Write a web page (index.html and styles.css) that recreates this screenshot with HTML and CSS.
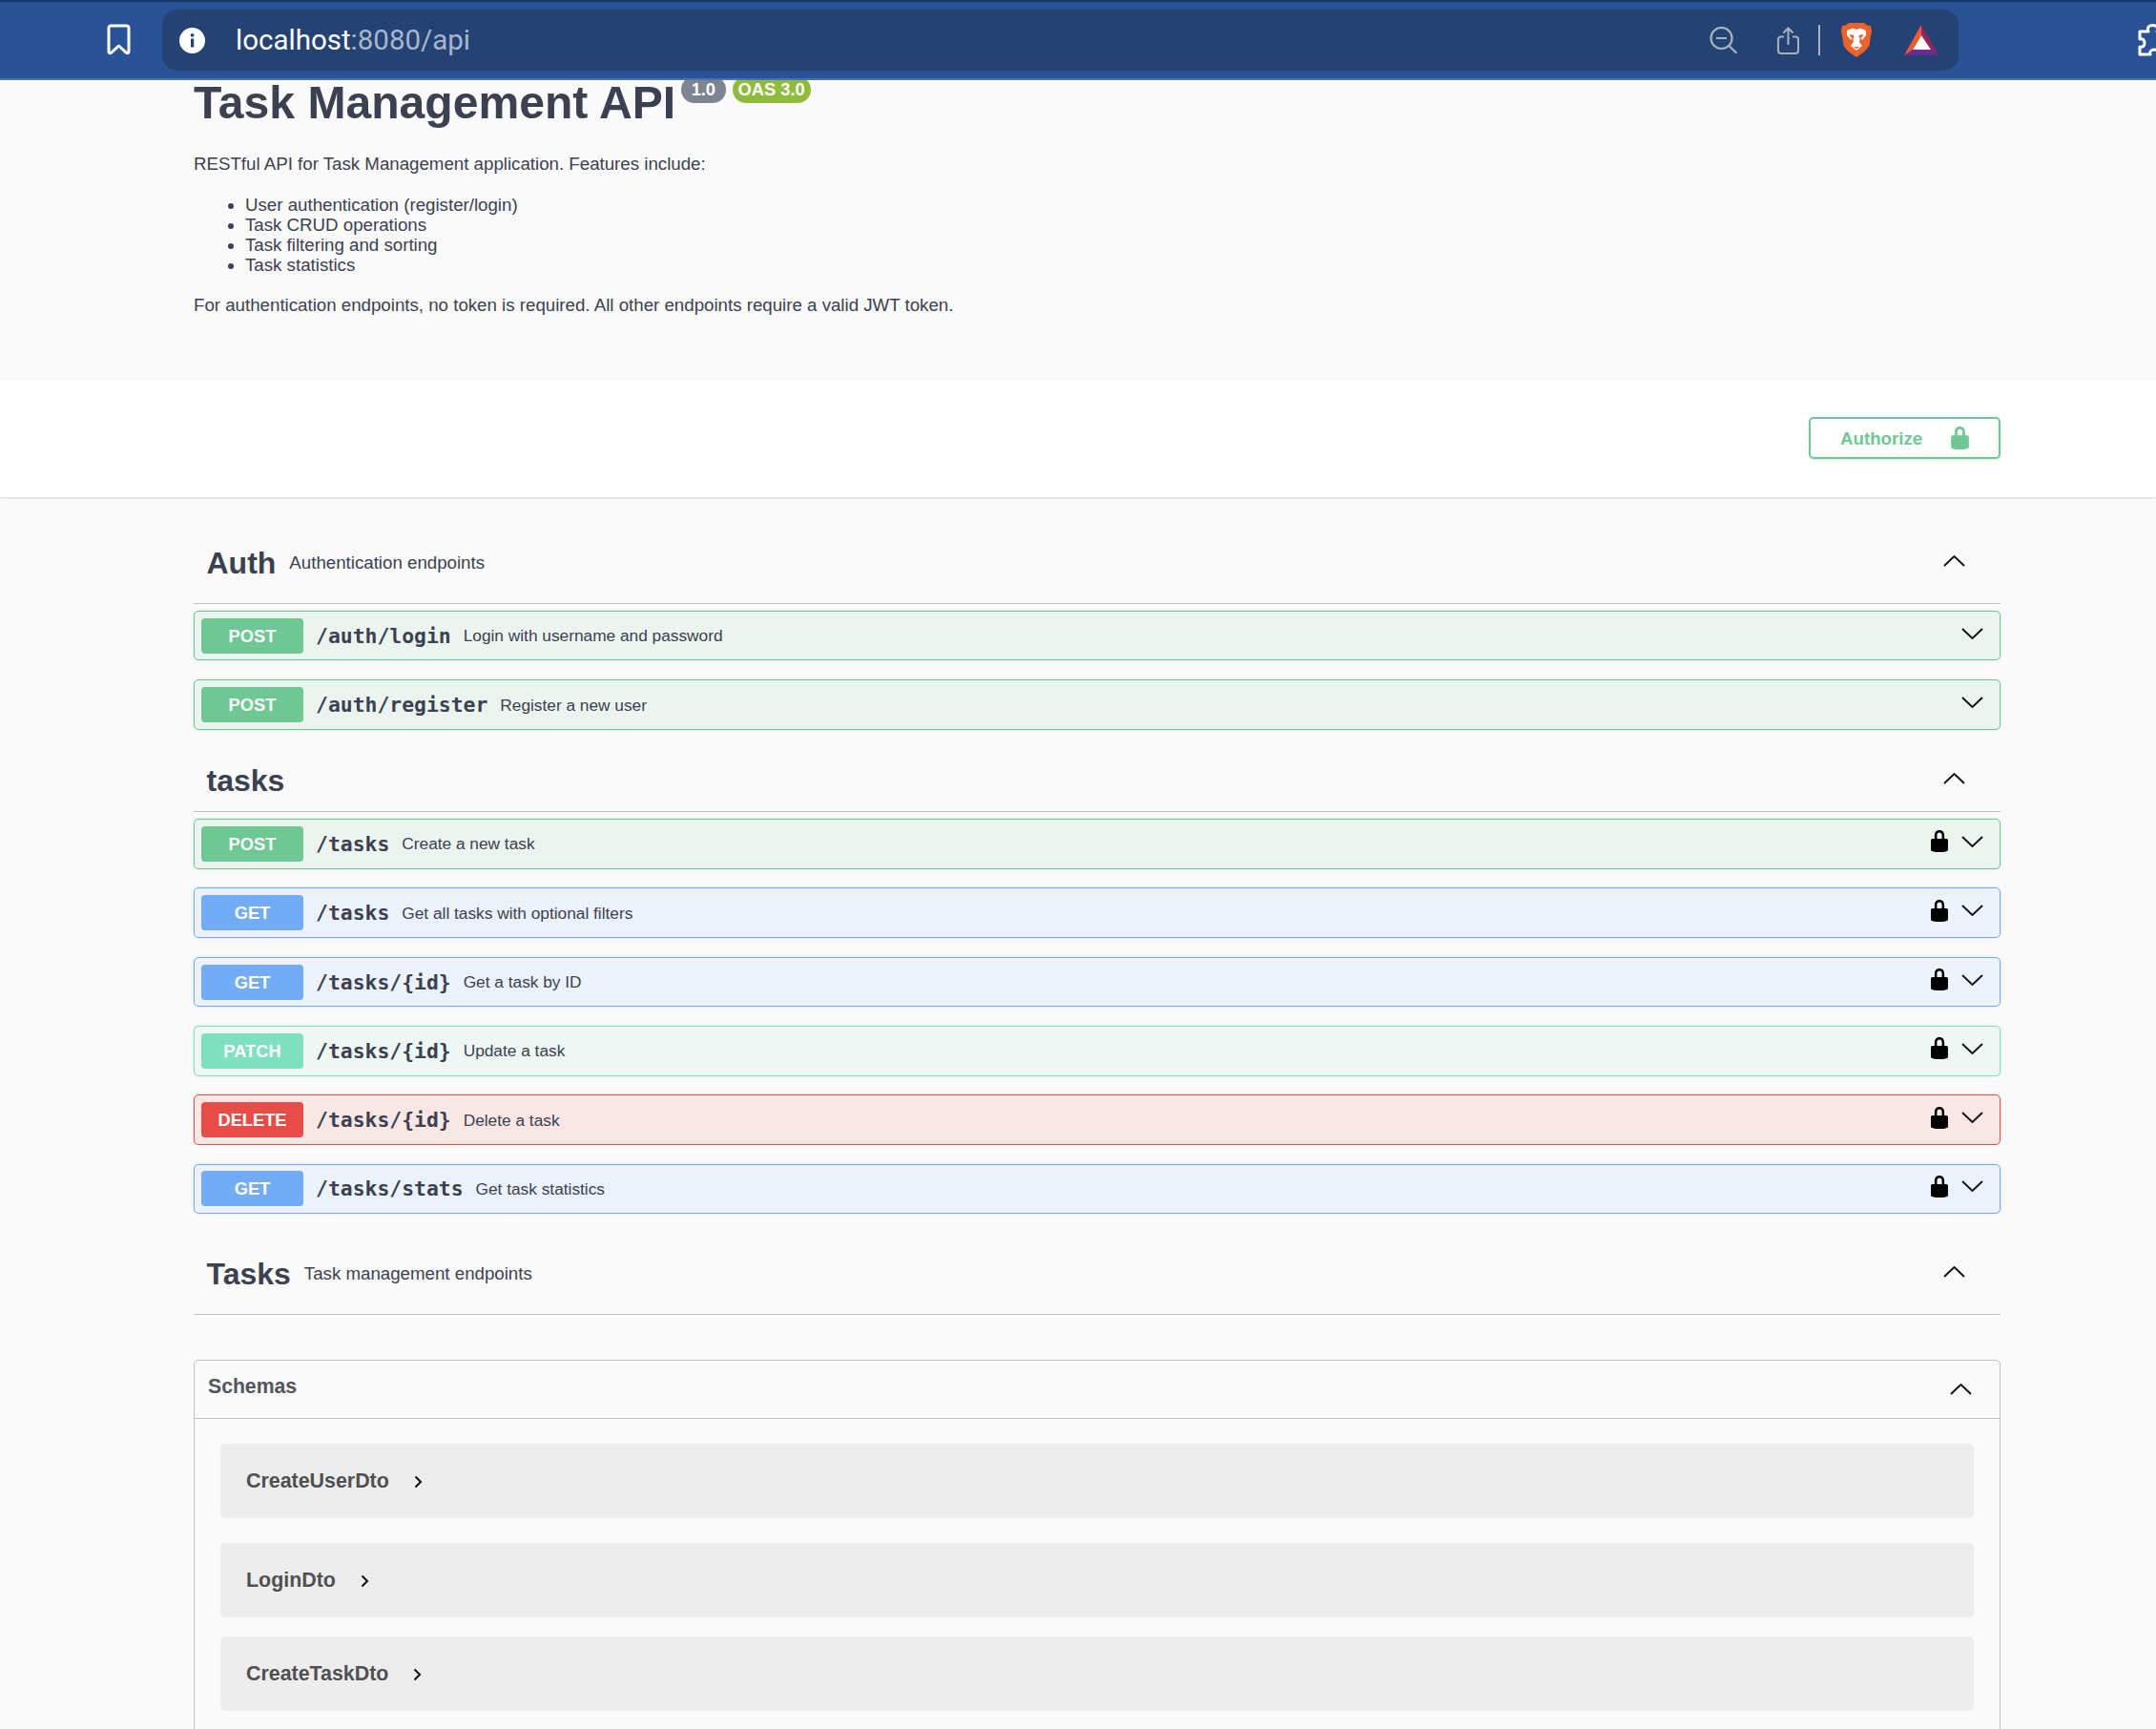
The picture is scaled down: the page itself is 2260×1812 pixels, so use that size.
FILE: index.html
```html
<!DOCTYPE html>
<html lang="en">
<head>
<meta charset="utf-8">
<title>Task Management API</title>
<link rel="stylesheet" href="styles.css">
</head>
<body>
<svg class="defs" aria-hidden="true">
  <symbol id="lock" viewBox="3 1 14 18"><path d="M15.8 8H14V5.6C14 2.703 12.665 1 10 1 7.334 1 6 2.703 6 5.6V8H4c-.553 0-1 .646-1 1.199V17c0 .549.428 1.139.951 1.307l1.197.387C5.672 18.861 6.55 19 7.1 19h5.8c.549 0 1.428-.139 1.951-.307l1.196-.387c.524-.167.953-.757.953-1.306V9.199C17 8.646 16.352 8 15.8 8zM12 8H8V5.199C8 3.754 8.797 3 10 3c1.203 0 2 .754 2 2.199V8z"/></symbol>
  <symbol id="down" viewBox="0 0 23 12"><path d="M1 1l10.500 10L22 1" fill="none" stroke="currentColor" stroke-width="1.900"/></symbol>
  <symbol id="up" viewBox="0 0 23 12"><path d="M1 11L11.500 1 22 11" fill="none" stroke="currentColor" stroke-width="1.900"/></symbol>
  <symbol id="right" viewBox="0 0 9 14"><path d="M1.500 1.500L7 7l-5.500 5.500" fill="none" stroke="currentColor" stroke-width="2"/></symbol>
</svg>

<header class="chrome">
  <svg class="ic-bookmark" viewBox="0 0 25 33"><path d="M4.500 2h16a2.500 2.500 0 0 1 2.500 2.500V29c0 1.800-1.500 2.300-2.700 1.200L12.500 23l-7.800 7.200C3.500 31.300 2 30.800 2 29V4.500A2.500 2.500 0 0 1 4.500 2z" fill="none" stroke="#fff" stroke-width="3" stroke-linejoin="round"/></svg>
  <div class="urlbar">
    <svg class="ic-info" viewBox="0 0 27 27"><circle cx="13.500" cy="13.500" r="13.500" fill="#fff"/><rect x="12" y="11.500" width="3.200" height="9" fill="#244273"/><circle cx="13.600" cy="7.800" r="1.900" fill="#244273"/></svg>
    <div class="url"><span class="url-host">localhost</span><span class="url-rest">:8080/api</span></div>
    <div class="url-tools">
      <svg class="ic-zoom" viewBox="0 0 30 28"><circle cx="12.500" cy="12" r="11" fill="none" stroke="#a9b1bd" stroke-width="2.200"/><path d="M7 12h11M20.500 20l8 8" fill="none" stroke="#a9b1bd" stroke-width="2.200"/></svg>
      <svg class="ic-share" viewBox="0 0 23 29"><path d="M7 10.500H4a3 3 0 0 0-3 3V25a3 3 0 0 0 3 3h15a3 3 0 0 0 3-3V13.500a3 3 0 0 0-3-3h-3M11.500 19V1.500M6.500 6.500l5-5 5 5" fill="none" stroke="#a9b1bd" stroke-width="2"/></svg>
      <span class="tool-sep"></span>
      <svg class="ic-brave" viewBox="0 0 32 36"><path d="M8 0h16l3 2.500 4 .500 1 6-1 4-1.500 11-5 6L16 36l-8.500-6-5-6L1 13 0 9l1-6 4-.500z" fill="#f0622b"/><path d="M6 8l6-2.500 4 1.500 4-1.500 6 2.500v5l-4 5-2-3-1 5 3 4-6 5-6-5 3-4-1-5-2 3-4-5z" fill="#fff"/><path d="M8.500 12l5 1-.500 3-3-1zM23.500 12l-5 1 .500 3 3-1z" fill="#f0622b"/><path d="M12.500 25h7l-3.500 2z" fill="#f0622b"/></svg>
      <svg class="ic-bat" viewBox="0 0 36 32"><path d="M18 0l18 32-8-6-10-15z" fill="#93265f"/><path d="M0 32l9-6h19l8 6z" fill="#662d91"/><path d="M18 11l10 15H9z" fill="#fff"/><path d="M18 0v11L9 26 0 32z" fill="#f15a30"/></svg>
    </div>
  </div>
  <svg class="ic-puzzle" viewBox="0 0 36 34"><path d="M2 8h9c-2-4 1-6.500 4.500-6.500S22 4 20 8h9v8c4-2 6-.5 6 3s-2 6-6 4v9h-8c1-3-1-5-4-5s-5 2-4 5H2v-8c3 1 5-1 5-4s-2-5-5-4z" fill="none" stroke="#fff" stroke-width="3" stroke-linejoin="round"/></svg>
</header>

<section class="info">
  <div class="title-row">
    <h1 class="title">Task Management API</h1>
    <span class="stamp stamp-version">1.0</span>
    <span class="stamp stamp-oas">OAS 3.0</span>
  </div>
  <p class="info-lead">RESTful API for Task Management application. Features include:</p>
  <ul class="info-list">
    <li>User authentication (register/login)</li>
    <li>Task CRUD operations</li>
    <li>Task filtering and sorting</li>
    <li>Task statistics</li>
  </ul>
  <p class="info-note">For authentication endpoints, no token is required. All other endpoints require a valid JWT token.</p>
</section>

<section class="auth-band">
  <button class="authorize"><span>Authorize</span><svg class="authorize-lock"><use href="#lock"/></svg></button>
</section>

<main class="main">
  <section class="tag-section">
    <div class="tag-head">
      <h2 class="tag-name">Auth</h2><span class="tag-desc">Authentication endpoints</span>
      <svg class="tag-chevron"><use href="#up"/></svg>
    </div>
    <div class="op op-post">
      <span class="method">POST</span><span class="path">/auth/login</span><span class="op-desc">Login with username and password</span>
      <svg class="op-chevron"><use href="#down"/></svg>
    </div>
    <div class="op op-post">
      <span class="method">POST</span><span class="path">/auth/register</span><span class="op-desc">Register a new user</span>
      <svg class="op-chevron"><use href="#down"/></svg>
    </div>
  </section>

  <section class="tag-section">
    <div class="tag-head tag-head-short">
      <h2 class="tag-name">tasks</h2>
      <svg class="tag-chevron"><use href="#up"/></svg>
    </div>
    <div class="op op-post">
      <span class="method">POST</span><span class="path">/tasks</span><span class="op-desc">Create a new task</span>
      <svg class="op-lock"><use href="#lock"/></svg><svg class="op-chevron"><use href="#down"/></svg>
    </div>
    <div class="op op-get">
      <span class="method">GET</span><span class="path">/tasks</span><span class="op-desc">Get all tasks with optional filters</span>
      <svg class="op-lock"><use href="#lock"/></svg><svg class="op-chevron"><use href="#down"/></svg>
    </div>
    <div class="op op-get">
      <span class="method">GET</span><span class="path">/tasks/{id}</span><span class="op-desc">Get a task by ID</span>
      <svg class="op-lock"><use href="#lock"/></svg><svg class="op-chevron"><use href="#down"/></svg>
    </div>
    <div class="op op-patch">
      <span class="method">PATCH</span><span class="path">/tasks/{id}</span><span class="op-desc">Update a task</span>
      <svg class="op-lock"><use href="#lock"/></svg><svg class="op-chevron"><use href="#down"/></svg>
    </div>
    <div class="op op-delete">
      <span class="method">DELETE</span><span class="path">/tasks/{id}</span><span class="op-desc">Delete a task</span>
      <svg class="op-lock"><use href="#lock"/></svg><svg class="op-chevron"><use href="#down"/></svg>
    </div>
    <div class="op op-get">
      <span class="method">GET</span><span class="path">/tasks/stats</span><span class="op-desc">Get task statistics</span>
      <svg class="op-lock"><use href="#lock"/></svg><svg class="op-chevron"><use href="#down"/></svg>
    </div>
  </section>

  <section class="tag-section">
    <div class="tag-head">
      <h2 class="tag-name">Tasks</h2><span class="tag-desc">Task management endpoints</span>
      <svg class="tag-chevron"><use href="#up"/></svg>
    </div>
  </section>

  <section class="schemas">
    <div class="schemas-head">
      <h4 class="schemas-title">Schemas</h4>
      <svg class="schemas-chevron"><use href="#up"/></svg>
    </div>
    <div class="model model-first"><span class="model-name">CreateUserDto</span><svg class="model-arrow"><use href="#right"/></svg></div>
    <div class="model model-second"><span class="model-name">LoginDto</span><svg class="model-arrow"><use href="#right"/></svg></div>
    <div class="model"><span class="model-name">CreateTaskDto</span><svg class="model-arrow"><use href="#right"/></svg></div>
  </section>
</main>
</body>
</html>
```

FILE: styles.css
```css
* { box-sizing: border-box; }

html, body {
  margin: 0;
  height: 1812px;
  overflow: hidden;
  background: #fafafa;
  color: #3b4151;
  font-family: "Liberation Sans", Arial, sans-serif;
}

.defs { display: none; }

/* browser toolbar */
.chrome {
  position: relative;
  z-index: 2;
  height: 84px;
  display: flex;
  align-items: flex-start;
  padding-left: 112px;
  background: #2a5296;
  border-top: 2px solid #1b3563;
  border-bottom: 2px solid #4a72ad;
  overflow: hidden;
}

.ic-bookmark { width: 25px; height: 33px; margin-top: 23px; flex: none; }

.urlbar {
  width: 1883px;
  height: 64px;
  margin: 8px 0 0 33px;
  padding: 0 21px 0 18px;
  display: flex;
  align-items: center;
  flex: none;
  background: #244273;
  border-radius: 16px;
}

.ic-info { width: 27px; height: 27px; flex: none; }

.url {
  margin-left: 32px;
  font-family: Roboto, sans-serif;
  font-size: 29.500px;
  font-weight: 400;
  line-height: 36px;
}
.url-host { color: #fff; }
.url-rest { color: #a8b6cc; }

.url-tools { margin-left: auto; display: flex; align-items: center; }
.ic-zoom { width: 30px; height: 28px; }
.ic-share { width: 23px; height: 29px; margin-left: 41px; }
.tool-sep { width: 2px; height: 32px; margin-left: 20.500px; background: #a9b1bd; }
.ic-brave { width: 32px; height: 36px; margin-left: 22px; }
.ic-bat { width: 36px; height: 32px; margin-left: 34px; }

.ic-puzzle { width: 36px; height: 34px; margin: 23px 0 0 188px; flex: none; }

/* info */
.info {
  height: 314px;
  padding-left: 203px;
  background: #fafafa;
}

.title-row { display: flex; align-items: flex-start; }

.title {
  margin: 0;
  font-size: 48.100px;
  line-height: 47px;
  font-weight: 700;
  white-space: nowrap;
}

.stamp {
  height: 28px;
  margin-top: -4px;
  border-radius: 14px;
  color: #fff;
  font-size: 18.300px;
  font-weight: 700;
  line-height: 28px;
  white-space: nowrap;
}
.stamp-version { margin-left: 6px; padding: 0 10.500px; background: #7d8492; }
.stamp-oas { margin-left: 7px; padding: 0 6px; background: #8fbc3c; }

.info-lead, .info-note, .info-list {
  font-size: 18.700px;
  line-height: 21px;
}
.info-lead { margin: 30px 0 0; }
.info-list { margin: 22px 0 0; padding: 0 0 0 54px; }
.info-note { margin: 21px 0 0; }

/* authorize band */
.auth-band {
  height: 123px;
  padding: 39px 163px 0 0;
  display: flex;
  justify-content: flex-end;
  align-items: flex-start;
  background: #fff;
  box-shadow: 0 1px 2px rgba(0, 0, 0, .15);
  position: relative;
}

.authorize {
  width: 201px;
  height: 44px;
  padding: 1px 0 0 31px;
  display: flex;
  align-items: center;
  background: transparent;
  border: 2px solid #6ec894;
  border-radius: 5px;
  box-shadow: 0 1px 2px rgba(0, 0, 0, .1);
  color: #6ec894;
  font-family: inherit;
  font-size: 18.700px;
  font-weight: 700;
}
.authorize-lock { width: 19px; height: 24px; margin: -1px 0 0 30px; fill: #6ec894; }

/* operations */
.main { padding: 26px 163px 0 203px; }

.tag-head {
  height: 86px;
  padding: 0 37px 0 13.500px;
  display: flex;
  align-items: center;
  border-bottom: 1px solid #bfbfc4;
  margin-bottom: 7px;
}
.tag-head-short { height: 66.500px; padding-top: 2px; }

.tag-name {
  margin: 0;
  font-size: 32px;
  line-height: 38px;
  font-weight: 700;
}
.tag-desc {
  margin-left: 14px;
  font-size: 18.700px;
  line-height: 22px;
}
.tag-chevron { width: 23px; height: 12px; margin: -4px 0 0 auto; color: #111; }

.op {
  height: 52.400px;
  margin-bottom: 19.950px;
  padding: 0 17px 0 7px;
  display: flex;
  align-items: center;
  border: 1px solid;
  border-radius: 5px;
  box-shadow: 0 0 3px rgba(0, 0, 0, .12);
}
.op-post { background: #ebf4ef; border-color: #6ec894; }
.op-get { background: #ebf2fb; border-color: #72abf6; }
.op-patch { background: #eef7f4; border-color: #7de0bf; }
.op-delete { background: #f9e7e6; border-color: #e84c47; }

.method {
  width: 107px;
  height: 37px;
  flex: none;
  border-radius: 4px;
  color: #fff;
  font-size: 18.300px;
  font-weight: 700;
  line-height: 37px;
  text-align: center;
}
.op-post .method { background: #6ec894; }
.op-get .method { background: #72abf6; }
.op-patch .method { background: #7de0bf; }
.op-delete .method { background: #e84c47; }

.path {
  margin: 0 0 0 13px;
  font-family: "DejaVu Sans Mono", monospace;
  font-size: 21.400px;
  font-weight: 700;
  white-space: nowrap;
}
.op-desc {
  margin: 1px 0 0 13px;
  font-size: 17.300px;
  white-space: nowrap;
}
.op-lock { width: 18px; height: 23px; margin: -5px 14px 0 auto; fill: #000; }
.op-chevron { width: 23px; height: 12px; margin: -5px 0 0 0; color: #111; flex: none; }
.op-desc + .op-chevron { margin-left: auto; }

/* schemas */
.schemas {
  height: 420px;
  margin-top: 46.500px;
  border: 1px solid #bfbfc4;
  border-radius: 5px;
}

.schemas-head {
  height: 61px;
  padding: 0 29px 5px 14px;
  display: flex;
  align-items: center;
  border-bottom: 1px solid #bfbfc4;
}
.schemas-title {
  margin: 0;
  color: #505560;
  font-size: 21.200px;
  font-weight: 700;
}
.schemas-chevron { width: 23px; height: 12px; margin: 5px 0 0 auto; color: #111; }

.model {
  height: 78px;
  margin: 20px 27px 0;
  padding: 1px 0 0 27px;
  display: flex;
  align-items: center;
  background: #ededed;
  border-radius: 5px;
}
.model-first { margin-top: 26px; }
.model-second { margin-top: 26px; }

.model-name {
  color: #505050;
  font-size: 21.400px;
  font-weight: 700;
}
.model-arrow { width: 9px; height: 14px; margin: 2px 0 0 26px; color: #111; }
```
